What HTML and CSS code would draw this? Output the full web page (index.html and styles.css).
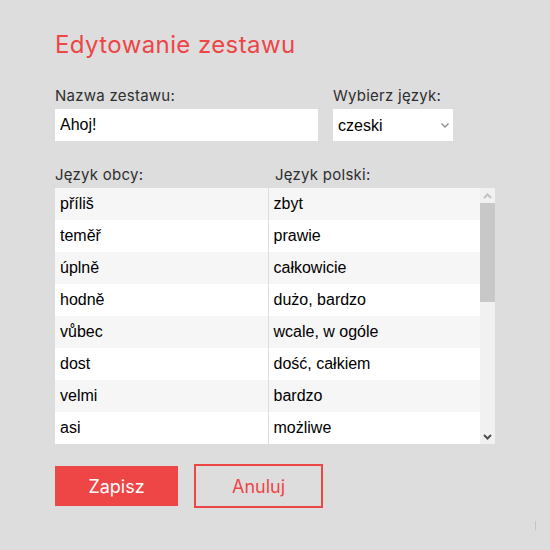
FILE: index.html
```html
<!DOCTYPE html>
<html lang="pl">
<head>
<meta charset="utf-8">
<title>Edytowanie zestawu</title>
<link rel="stylesheet" href="styles.css">
</head>
<body>
<div class="page">
  <h1 class="title">Edytowanie zestawu</h1>
  <div class="form-row">
    <div class="field field-name">
      <label class="label" for="name">Nazwa zestawu:</label>
      <input class="input" id="name" type="text" value="Ahoj!">
    </div>
    <div class="field field-lang">
      <label class="label" for="lang">Wybierz język:</label>
      <div class="select-wrap">
        <select class="select" id="lang">
          <option>czeski</option>
          <option>słowacki</option>
        </select>
        <svg class="chevron" width="8" height="5" viewBox="0 0 8 5"><path d="M0.5 0.5 L4 4 L7.5 0.5" fill="none" stroke="#8a8a8a" stroke-width="1.3"/></svg>
      </div>
    </div>
  </div>
  <div class="cols-head">
    <div class="col-label">Język obcy:</div>
    <div class="col-label col-label-2">Język polski:</div>
  </div>
  <div class="table-box">
    <div class="table-wrap">
      <table class="words">
        <tr><td>příliš</td><td>zbyt</td></tr>
        <tr><td>teměř</td><td>prawie</td></tr>
        <tr><td>úplně</td><td>całkowicie</td></tr>
        <tr><td>hodně</td><td>dużo, bardzo</td></tr>
        <tr><td>vůbec</td><td>wcale, w ogóle</td></tr>
        <tr><td>dost</td><td>dość, całkiem</td></tr>
        <tr><td>velmi</td><td>bardzo</td></tr>
        <tr><td>asi</td><td>możliwe</td></tr>
        <tr><td>hned</td><td>od razu</td></tr>
        <tr><td>docela</td><td>dosyć</td></tr>
        <tr><td>spíš</td><td>raczej</td></tr>
        <tr><td>zase</td><td>znowu</td></tr>
        <tr><td>ještě</td><td>jeszcze</td></tr>
        <tr><td>už</td><td>już</td></tr>
        <tr><td>pořád</td><td>ciągle</td></tr>
        <tr><td>často</td><td>często</td></tr>
        <tr><td>někdy</td><td>czasami</td></tr>
        <tr><td>nikdy</td><td>nigdy</td></tr>
      </table>
    </div>
    <div class="scrollbar" aria-hidden="true">
      <div class="sb-btn">
        <svg width="9" height="6" viewBox="0 0 9 6"><path d="M1 5 L4.5 1.5 L8 5" fill="none" stroke="#c2c2c2" stroke-width="2"/></svg>
      </div>
      <div class="sb-track">
        <div class="sb-thumb"></div>
      </div>
      <div class="sb-btn">
        <svg width="9" height="6" viewBox="0 0 9 6"><path d="M1 1 L4.5 4.5 L8 1" fill="none" stroke="#505050" stroke-width="2"/></svg>
      </div>
    </div>
  </div>
  <div class="actions">
    <button class="btn btn-primary" type="button">Zapisz</button>
    <button class="btn btn-outline" type="button">Anuluj</button>
  </div>
</div>
<div class="corner-mark"></div>
</body>
</html>
```

FILE: styles.css
```css
html, body {
  margin: 0;
  padding: 0;
  background: #dddddd;
}
body {
  font-family: "Inter", "Noto Sans", "Liberation Sans", sans-serif;
  color: #333333;
  height: 550px;
  position: relative;
  overflow: hidden;
}
.page {
  padding: 30px 55px 0 55px;
}
.title {
  margin: 0;
  font-size: 24px;
  font-weight: 400;
  color: #ee4547;
  line-height: 30px;
  letter-spacing: 0.4px;
}
.form-row {
  display: flex;
  gap: 15px;
  margin-top: 26px;
}
.field {
  display: flex;
  flex-direction: column;
}
.field-name { width: 263px; }
.field-lang { width: 120px; }
.label {
  font-size: 15px;
  line-height: 20px;
  height: 20px;
  margin-bottom: 3px;
  color: #2f2f2f;
  letter-spacing: 0.25px;
}
.input {
  height: 32px;
  box-sizing: border-box;
  border: none;
  outline: none;
  background: #ffffff;
  padding: 0 5px;
  font-family: "Liberation Sans", Arial, sans-serif;
  font-size: 16px;
  color: #000000;
  margin: 0;
}
.select-wrap {
  position: relative;
  height: 32px;
}
.select {
  -webkit-appearance: none;
  appearance: none;
  width: 120px;
  height: 32px;
  border: none;
  outline: none;
  background: #ffffff;
  padding: 0 5px;
  margin: 0;
  font-family: "Liberation Sans", Arial, sans-serif;
  font-size: 16px;
  color: #000000;
  border-radius: 0;
}
.chevron {
  position: absolute;
  left: 108px;
  top: 14px;
  pointer-events: none;
}
.cols-head {
  display: flex;
  margin-top: 22px;
  height: 23px;
  padding-top: 2px;
}
.col-label {
  font-size: 15px;
  line-height: 20px;
  width: 220px;
  color: #2f2f2f;
  letter-spacing: 0.25px;
}
.col-label-2 {
  width: auto;
}
.table-box {
  display: flex;
  width: 440px;
  height: 256px;
  background: #ffffff;
}
.table-wrap {
  flex: 1;
  height: 256px;
  overflow-y: auto;
  scrollbar-width: none;
}
.table-wrap::-webkit-scrollbar {
  display: none;
}
.scrollbar {
  width: 15px;
  display: flex;
  flex-direction: column;
  background: #f1f1f1;
}
.sb-btn {
  height: 15px;
  display: flex;
  align-items: center;
  justify-content: center;
}
.sb-track {
  flex: 1;
}
.sb-thumb {
  height: 99px;
  background: #c8c8c8;
}
.words {
  width: 100%;
  border-collapse: collapse;
  font-family: "Liberation Sans", Arial, sans-serif;
  font-size: 16px;
  color: #000000;
  table-layout: fixed;
}
.words td {
  height: 32px;
  padding: 0 5px;
  box-sizing: border-box;
  line-height: 32px;
}
.words td:first-child {
  width: 213px;
  border-right: 1px solid #dedede;
}
.words tr:nth-child(odd) {
  background: #f6f6f6;
}
.words tr:nth-child(even) {
  background: #ffffff;
}
.actions {
  display: flex;
  align-items: center;
  gap: 16px;
  margin-top: 20px;
}
.btn {
  font-family: "Inter", "Noto Sans", "Liberation Sans", sans-serif;
  font-size: 18px;
  cursor: pointer;
  margin: 0;
  border-radius: 0;
}
.btn-primary {
  width: 123px;
  height: 40px;
  border: none;
  background: #ee4547;
  color: #ffffff;
}
.btn-outline {
  width: 129px;
  height: 44px;
  border: 2px solid #ee4547;
  background: transparent;
  color: #ee4547;
}
.corner-mark {
  position: absolute;
  left: 535px;
  top: 521px;
  width: 1px;
  height: 9px;
  background: #c4c4c4;
}
```
